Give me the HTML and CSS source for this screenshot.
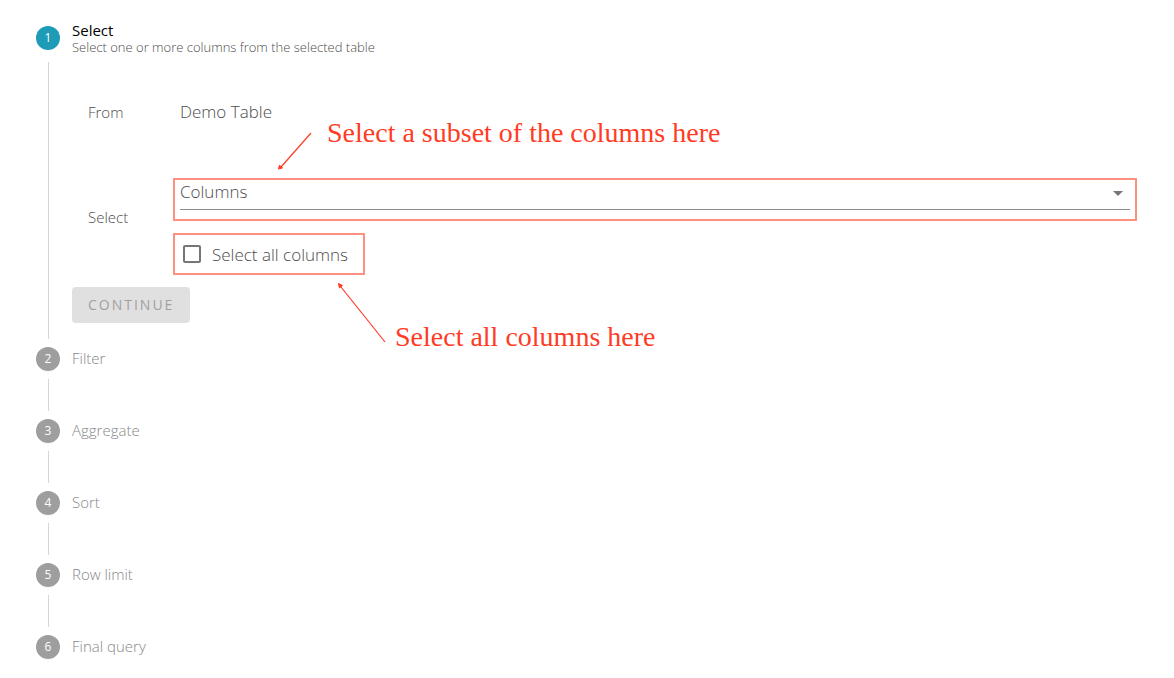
FILE: index.html
```html
<!DOCTYPE html>
<html lang="en">
<head>
<meta charset="utf-8">
<meta name="viewport" content="width=device-width, initial-scale=1">
<title>Query builder</title>
<link rel="stylesheet" href="styles.css">
</head>
<body>
<main class="page">
  <ol class="stepper">
    <li class="step step-active">
      <div class="step-header">
        <span class="step-number">1</span>
        <div class="step-heading">
          <h2 class="step-title">Select</h2>
          <p class="step-subtitle">Select one or more columns from the selected table</p>
        </div>
      </div>
      <form class="step-body">
        <div class="row row-from">
          <span class="row-label">From</span>
          <span class="row-value">Demo Table</span>
        </div>
        <div class="row row-select">
          <label class="row-label" for="columns">Select</label>
          <div class="controls">
            <div class="field">
              <select class="select" id="columns">
                <option>Columns</option>
              </select>
              <svg class="caret" viewBox="0 0 10 5" aria-hidden="true"><path d="M0 0h10L5 5z"/></svg>
              <div class="highlight highlight-field"></div>
              <svg class="arrow arrow-subset" viewBox="0 0 36 40" aria-hidden="true">
                <path class="arrow-line" d="M34 1 4 35"/>
                <path class="arrow-head" d="M1.500 37 2.500 33 5.500 36z"/>
              </svg>
              <p class="note note-subset">Select a subset of the columns here</p>
            </div>
            <div class="check">
              <label class="check-label"><input class="check-box" type="checkbox">Select all columns</label>
              <div class="highlight highlight-check"></div>
              <svg class="arrow arrow-all" viewBox="0 0 50 62" aria-hidden="true">
                <path class="arrow-line" d="M48 60 4 5"/>
                <path class="arrow-head" d="M1.500 1.500 5.500 3.500 2.500 6z"/>
              </svg>
              <p class="note note-all">Select all columns here</p>
            </div>
          </div>
        </div>
        <button class="continue" type="button" disabled>CONTINUE</button>
      </form>
    </li>
    <li class="step">
      <div class="step-header"><span class="step-number">2</span><h2 class="step-title">Filter</h2></div>
      <div class="step-body"></div>
    </li>
    <li class="step">
      <div class="step-header"><span class="step-number">3</span><h2 class="step-title">Aggregate</h2></div>
      <div class="step-body"></div>
    </li>
    <li class="step">
      <div class="step-header"><span class="step-number">4</span><h2 class="step-title">Sort</h2></div>
      <div class="step-body"></div>
    </li>
    <li class="step">
      <div class="step-header"><span class="step-number">5</span><h2 class="step-title">Row limit</h2></div>
      <div class="step-body"></div>
    </li>
    <li class="step">
      <div class="step-header"><span class="step-number">6</span><h2 class="step-title">Final query</h2></div>
    </li>
  </ol>
</main>
</body>
</html>
```
FILE: styles.css
```css
* {
  box-sizing: border-box;
}

body {
  margin: 0;
  background: #fff;
  color: #4c4c4c;
  font-family: "Open Sans", "Noto Sans", sans-serif;
  font-weight: 300;
}

h2,
p {
  margin: 0;
  font-weight: inherit;
}

.page {
  padding: 14px 44px 0 36px;
}

.stepper {
  margin: 0;
  padding: 0;
  list-style: none;
}

.step-header {
  display: flex;
  align-items: center;
  gap: 12px;
  height: 40px;
}

.step-active .step-header {
  height: 48px;
}

.step-number {
  display: flex;
  align-items: center;
  justify-content: center;
  width: 24px;
  height: 24px;
  padding-bottom: 1px;
  border-radius: 50%;
  background: #9e9e9e;
  color: #fff;
  font-size: 12px;
  font-weight: 400;
}

.step-active .step-number {
  background: #1e9bb7;
}

.step-title {
  padding-bottom: 2px;
  color: #888;
  font-size: 15px;
  line-height: 20px;
}

.step-active .step-title {
  padding: 0;
  color: #000;
  font-weight: 400;
  line-height: 18px;
}

.step-subtitle {
  font-size: 13px;
  line-height: 16px;
}

.step-body {
  min-height: 32px;
  margin-left: 12px;
  padding-left: 23px;
  border-left: 1px solid #d4d4d4;
}

.step-active .step-body {
  padding-bottom: 16px;
}

.row {
  display: grid;
  grid-template-columns: 92px 1fr;
  align-items: center;
  padding-left: 16px;
}

.row-from {
  align-content: center;
  align-items: baseline;
  min-height: 100px;
  padding-bottom: 2px;
}

.row-select {
  margin-top: 8px;
}

.row-label {
  font-size: 15px;
}

.row-select .row-label {
  padding-bottom: 2px;
}

.row-value {
  font-size: 17px;
}

.controls {
  padding-top: 6px;
}

.field,
.check {
  position: relative;
}

.select {
  display: block;
  width: 100%;
  height: 34px;
  padding: 0 20px 2px 0;
  border: 0;
  border-bottom: 1px solid #8c8c8c;
  border-radius: 0;
  background: transparent;
  color: inherit;
  font: inherit;
  font-size: 17px;
  appearance: none;
}

.caret {
  position: absolute;
  top: 15px;
  right: 7px;
  width: 10px;
  height: 5px;
  fill: #757575;
}

.check {
  width: fit-content;
  margin-top: 32px;
}

.check-label {
  display: flex;
  align-items: center;
  gap: 11px;
  height: 24px;
  padding-left: 3px;
  font-size: 17px;
}

.check-box {
  width: 18px;
  height: 18px;
  margin: 0;
  border: 2px solid #757575;
  border-radius: 2px;
  background: #fff;
  appearance: none;
}

.highlight {
  position: absolute;
  border: 2px solid #ff9080;
  pointer-events: none;
}

.highlight-field {
  inset: 2px -7px -11px;
}

.highlight-check {
  top: -9px;
  left: -7px;
  width: 192px;
  height: 42px;
}

.note {
  position: absolute;
  color: #ff3b24;
  font-family: "Liberation Serif", serif;
  font-size: 28px;
  font-weight: 400;
  line-height: 32px;
  white-space: nowrap;
}

.note-subset {
  top: -59px;
  left: 147px;
}

.note-all {
  top: 79px;
  left: 215px;
}

.arrow {
  position: absolute;
}

.arrow-line {
  fill: none;
  stroke: #ff3b24;
  stroke-width: 1.2;
}

.arrow-head {
  fill: #ff3b24;
  stroke: #ff3b24;
}

.arrow-subset {
  top: -44px;
  left: 97px;
  width: 36px;
  height: 40px;
}

.arrow-all {
  top: 40px;
  left: 157px;
  width: 50px;
  height: 62px;
}

.continue {
  display: block;
  height: 36px;
  margin-top: 21px;
  padding: 0 16px 2px;
  border: 0;
  border-radius: 4px;
  background: #e0e0e0;
  color: #a0a0a0;
  font: inherit;
  font-size: 14px;
  font-weight: 400;
  letter-spacing: 2px;
}
```
